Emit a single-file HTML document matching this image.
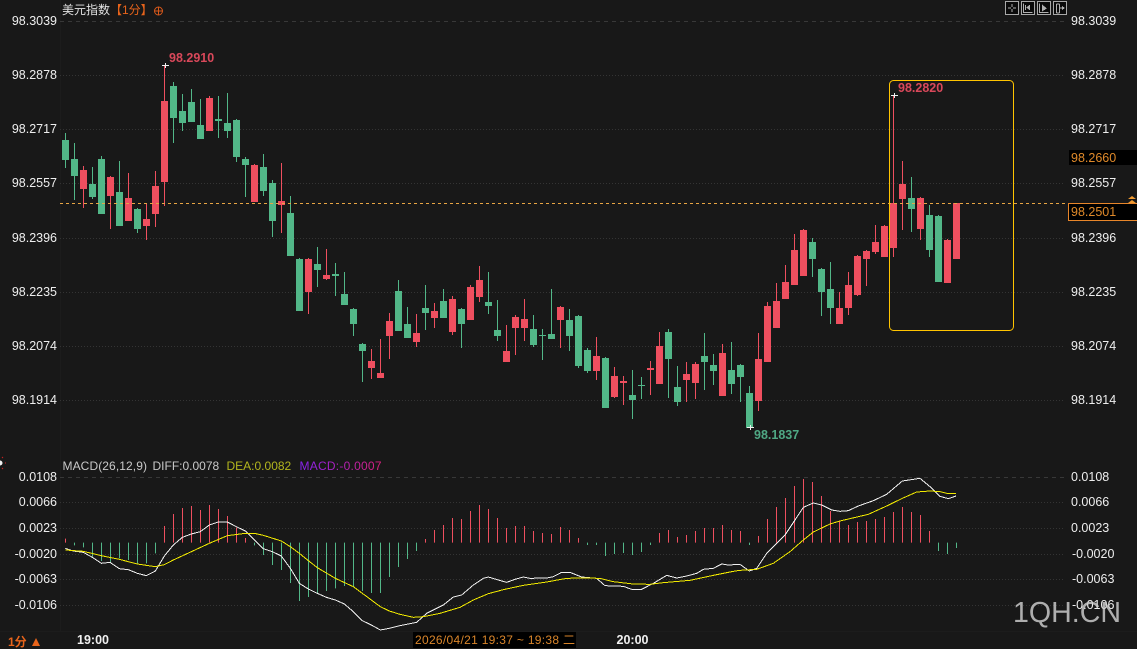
<!DOCTYPE html>
<html lang="zh"><head><meta charset="utf-8"><title>美元指数</title>
<style>
html,body{margin:0;padding:0;background:#181818;width:1137px;height:649px;overflow:hidden}
svg{display:block;position:absolute;left:0;top:0}
text{font-family:"Liberation Sans","Noto Sans CJK SC",sans-serif;font-size:12px;white-space:pre}
.ax{fill:#eeeeee}
.ax text,.n{font-size:12.5px}
.b{font-weight:bold}
</style></head><body>
<svg width="1137" height="649" viewBox="0 0 1137 649" xmlns="http://www.w3.org/2000/svg">
<defs><linearGradient id="mg" gradientUnits="userSpaceOnUse" x1="300" y1="0" x2="382" y2="0"><stop offset="0" stop-color="#8422ee"/><stop offset="1" stop-color="#d8207c"/></linearGradient></defs>
<rect width="1137" height="649" fill="#181818"/>
<path d="M60.5 0V631M0 631.5H1137" stroke="#1c1c1c"/>
<g shape-rendering="crispEdges">
<path d="M60 21.5H1065M60 477.5H1065" stroke="#383838" stroke-dasharray="4 4"/>
<path d="M60 75.5H1065M60 129.5H1065M60 183.5H1065M60 238.5H1065M60 292.5H1065M60 346.5H1065M60 400.5H1065M60 502.5H1065M60 528.5H1065M60 554.5H1065M60 579.5H1065M60 605.5H1065" stroke="#343434" stroke-dasharray="1 2"/>
<!-- green wicks -->
<path fill="none" stroke="#52b788" d="M65.5 133V168M74.5 143V200M92.5 167V199M101.5 156V214M119.5 161V226M137.5 208V233M173.5 82V143M182.5 94V131M191.5 89V122M200.5 99V139M218.5 96V138M227.5 93V138M236.5 119V162M245.5 157V197M263.5 154V196M272.5 180V237M290.5 196V256M299.5 258V311M317.5 247V287M335.5 263V296M344.5 272V305M353.5 308V336M362.5 343V382M398.5 280V331M407.5 307V338M425.5 285V330M443.5 289V318M461.5 308V348M488.5 272V314M497.5 300V341M533.5 315V347M542.5 329V360M551.5 289V339M569.5 309V351M578.5 315V368M587.5 348V373M605.5 357V408M632.5 370V419M641.5 377V399M668.5 329V398M677.5 366V406M704.5 333V390M713.5 354V385M731.5 342V394M740.5 364V402M749.5 386V428M812.5 238V277M821.5 268V316M830.5 262V324M911.5 177V232M929.5 205V257M938.5 215V282"/>
<!-- green bodies -->
<path fill="none" stroke="#52b788" stroke-width="7" d="M65.5 140V160M74.5 159V176M92.5 184V197M101.5 159V214M119.5 192V226M137.5 209V229M173.5 86V118M182.5 111V123M191.5 102V122M200.5 125V139M218.5 119V121M227.5 123V131M236.5 120V157M245.5 159V165M263.5 167V191M272.5 183V221M290.5 213V256M299.5 259V311M317.5 264V270M335.5 274V276M344.5 294V305M353.5 309V324M362.5 344V351M398.5 291V331M407.5 324V338M425.5 308V313M443.5 301V318M461.5 309V324M488.5 302V306M497.5 330V336M533.5 329V345M542.5 335V336M551.5 334V339M569.5 320V336M578.5 316V366M587.5 350V371M605.5 358V408M632.5 395V400M641.5 385V386M668.5 332V359M677.5 387V402M704.5 356V362M713.5 365V371M731.5 370V384M740.5 365V377M749.5 393V428M812.5 242V259M821.5 269V292M830.5 289V308M911.5 198V209M929.5 215V250M938.5 216V282"/>
<!-- red wicks -->
<path fill="none" stroke="#ef4f5f" d="M83.5 166V208M110.5 176V229M128.5 173V221M146.5 203V240M155.5 171V227M164.5 65V206M209.5 96V131M254.5 164V202M281.5 163V233M308.5 258V314M326.5 249V280M371.5 349V379M380.5 339V378M389.5 313V359M416.5 314V347M434.5 303V328M452.5 296V335M470.5 285V320M479.5 266V302M506.5 325V362M515.5 315V355M524.5 299V341M560.5 306V348M596.5 337V380M614.5 367V398M623.5 376V405M650.5 361V395M659.5 332V384M686.5 362V402M695.5 362V399M722.5 344V396M758.5 333V411M767.5 302V362M776.5 283V328M785.5 265V299M794.5 234V285M803.5 229V276M839.5 292V324M848.5 272V315M857.5 255V296M866.5 250V286M875.5 225V254M884.5 225V257M893.5 95V257M902.5 161V230M920.5 197V240M947.5 239V283M956.5 203V259"/>
<!-- red bodies -->
<path fill="none" stroke="#ef4f5f" stroke-width="7" d="M83.5 170V189M110.5 177V196M128.5 198V221M146.5 219V226M155.5 186V214M164.5 101V182M209.5 98V131M254.5 165V202M281.5 201V205M308.5 259V292M326.5 275V279M371.5 361V368M380.5 373V378M389.5 321V336M416.5 333V342M434.5 311V318M452.5 299V332M470.5 287V320M479.5 280V297M506.5 351V362M515.5 317V328M524.5 319V328M560.5 307V320M596.5 356V371M614.5 376V397M623.5 381V383M650.5 368V370M659.5 346V384M686.5 374V380M695.5 364V383M722.5 353V396M758.5 359V401M767.5 306V362M776.5 301V328M785.5 282V299M794.5 250V285M803.5 230V276M839.5 308V324M848.5 285V308M857.5 256V295M866.5 251V259M875.5 242V252M884.5 226V257M893.5 203V248M902.5 184V199M920.5 198V229M947.5 240V283M956.5 203V259"/>
<!-- crosses -->
<path stroke="#f0f0f0" fill="none" d="M162 65.5h7M165.5 63v5M891 95.5h7M894.5 93v5M747 427.5h7M750.5 425v5"/>
<!-- price line -->
<path d="M60 203.5H1065" stroke="#e8a544" stroke-dasharray="3 3"/>
<!-- macd bars -->
<g transform="translate(0 450) scale(1 .33333)" fill="none">
<path stroke="#52b788" d="M74.5 278V286M83.5 278V292M92.5 278V320M101.5 278V333M110.5 278V338M119.5 278V325M128.5 278V330M137.5 278V340M146.5 278V340M155.5 278V310M254.5 278V286M263.5 278V315M272.5 278V345M281.5 278V360M290.5 278V399M299.5 278V453M308.5 278V441M317.5 278V430M326.5 278V423M335.5 278V415M344.5 278V408M353.5 278V412M362.5 278V423M371.5 278V429M380.5 278V429M389.5 278V381M398.5 278V351M407.5 278V327M416.5 278V303M587.5 278V285M596.5 278V285M605.5 278V318M614.5 278V312M623.5 278V309M632.5 278V315M641.5 278V306M650.5 278V285M749.5 278V285M938.5 278V303M947.5 278V312M956.5 278V294"/>
<path stroke="#ef4f5f" d="M65.5 278V266M164.5 278V228M173.5 278V192M182.5 278V174M191.5 278V168M200.5 278V180M209.5 278V165M218.5 278V177M227.5 278V198M236.5 278V233M245.5 278V264M425.5 278V267M434.5 278V240M443.5 278V225M452.5 278V204M461.5 278V207M470.5 278V183M479.5 278V165M488.5 278V177M497.5 278V204M506.5 278V234M515.5 278V228M524.5 278V228M533.5 278V243M542.5 278V249M551.5 278V252M560.5 278V231M569.5 278V240M578.5 278V264M659.5 278V249M668.5 278V240M677.5 278V261M686.5 278V255M695.5 278V243M704.5 278V234M713.5 278V234M722.5 278V225M731.5 278V240M740.5 278V243M758.5 278V258M767.5 278V207M776.5 278V171M785.5 278V144M794.5 278V108M803.5 278V87M812.5 278V96M821.5 278V138M830.5 278V183M839.5 278V213M848.5 278V225M857.5 278V216M866.5 278V213M875.5 278V207M884.5 278V201M893.5 278V186M902.5 278V171M911.5 278V186M920.5 278V195M929.5 278V243"/>
</g>
</g>
<!-- MACD lines -->
<g fill="none" stroke-width="3" stroke-linejoin="round" shape-rendering="crispEdges">
<g transform="translate(0 450) scale(.33333)">
<polyline stroke="#f0f0f0" points="196,295 220,303 250,307 277,322 304,340 330,337 358,356 385,359 412,370 439,377 466,363 493,318 520,285 547,262 574,252 601,245 628,225 655,216 682,216 709,230 736,243 763,270 790,296 817,305 844,318 871,355 898,400 925,417 952,430 979,442 1006,450 1033,462 1060,485 1087,512 1114,525 1141,540 1168,535 1200,527"/>
<polyline stroke="#f2ea00" points="196,300 250,304 304,317 358,328 412,342 466,350 493,344 520,330 574,305 628,280 682,257 736,250 763,250 790,256 844,273 871,290 898,310 925,332 952,353 1006,385 1060,410 1114,450 1141,470 1168,483 1200,493"/>
</g>
<g transform="translate(400 450) scale(.33333)">
<polyline stroke="#f0f0f0" points="0,527 50,517 80,490 130,465 160,441 185,435 220,405 250,385 265,381 295,390 320,397 345,388 370,381 390,385 440,384 460,380 485,367 510,367 545,381 590,385 615,407 670,409 695,418 725,418 760,400 800,376 830,384 860,378 890,370 910,358 940,355 965,342 985,345 1020,343"/>
<polyline stroke="#f2ea00" points="0,493 40,502 70,500 120,490 180,472 220,450 265,431 310,419 370,406 440,396 500,385 550,384 600,385 640,395 700,402 750,403 790,398 870,391 940,376 1000,364 1020,361"/>
</g>
<g transform="translate(740 450) scale(.33333)">
<polyline stroke="#f0f0f0" points="0,343 28,363 50,355 80,310 135,255 165,210 190,172 220,159 245,165 275,180 300,184 325,182 355,168 400,152 440,133 487,93 540,85 570,110 600,139 625,146 648,138"/>
<polyline stroke="#f2ea00" points="0,361 50,358 100,340 150,305 190,270 220,246 270,222 300,213 385,193 440,168 487,145 530,126 570,123 600,125 620,130 648,130"/>
</g>
</g>
<!-- yellow box -->
<rect x="889.5" y="80.5" width="124" height="250" rx="4" fill="none" stroke="#ffc400"/>
<!-- left axis -->
<g class="ax" text-anchor="end">
<text x="57" y="25">98.3039</text><text x="57" y="79">98.2878</text><text x="57" y="133">98.2717</text><text x="57" y="187">98.2557</text><text x="57" y="242">98.2396</text><text x="57" y="296">98.2235</text><text x="57" y="350">98.2074</text><text x="57" y="404">98.1914</text>
<text x="57" y="481">0.0108</text><text x="57" y="506">0.0066</text><text x="57" y="532">0.0023</text><text x="57" y="558">-0.0020</text><text x="57" y="583">-0.0063</text><text x="57" y="609">-0.0106</text>
</g>
<!-- right axis -->
<rect x="1069" y="150" width="68" height="15" fill="#000"/>
<rect x="1068.5" y="203.5" width="69" height="17" fill="#000" stroke="#e8862a"/>
<g class="ax">
<text x="1071" y="25">98.3039</text><text x="1071" y="79">98.2878</text><text x="1071" y="133">98.2717</text><text x="1071" y="187">98.2557</text><text x="1071" y="242">98.2396</text><text x="1071" y="296">98.2235</text><text x="1071" y="350">98.2074</text><text x="1071" y="404">98.1914</text>
<text x="1071" y="481">0.0108</text><text x="1071" y="506">0.0066</text><text x="1071" y="532">0.0023</text><text x="1072" y="558">-0.0020</text><text x="1072" y="583">-0.0063</text><text x="1072" y="609">-0.0106</text>
</g>
<text x="1071" y="162" class="n" fill="#e08a2a">98.2660</text>
<text x="1071" y="216" class="n" fill="#e08a2a">98.2501</text>
<path d="M1128 199l4-3 4 3zM1128 203l4-3 4 3z" fill="#f09a30"/>
<!-- price marks -->
<text x="169" y="62" class="b n" fill="#d9485a">98.2910</text>
<text x="898" y="92" class="b n" fill="#d9485a">98.2820</text>
<text x="754" y="439" class="b n" fill="#4fa884">98.1837</text>
<!-- header -->
<text x="62" y="14" fill="#e2e2e2">美元指数</text>
<text x="110" y="14" fill="#e8641b">【1分】</text>
<g fill="none" stroke="#d8581a"><circle cx="158.5" cy="11" r="4"/><path d="M154 11h9M158.5 7v8"/></g>
<!-- toolbar -->
<g shape-rendering="crispEdges">
<g fill="#0a0a0a" stroke="#a8a8a8"><rect x="1005.5" y="1.5" width="13" height="13"/><rect x="1021.5" y="1.5" width="13" height="13"/><rect x="1037.5" y="1.5" width="13" height="13"/><rect x="1053.5" y="1.5" width="13" height="13"/></g>
<path stroke="#b0b0b0" fill="none" d="M1012 4v3M1012 9v3M1008 8h3M1013 8h3M1023.5 3.5v9h9M1029.5 5v5M1025.5 5v5M1039.5 3.5v9h9M1056.5 4v9M1059.5 4v9M1056.5 4h3M1056.5 13h3M1060 8h4"/>
<path fill="#b0b0b0" d="M1026 7.5l3-2v4zM1042 4.5l5 4-5 3zM1062 6l3 2-3 2z"/>
</g>
<!-- macd header -->
<text x="62.5" y="470" fill="#c9c9c9" textLength="84.5">MACD(26,12,9)</text>
<text x="152.5" y="470" fill="#c9c9c9">DIFF:0.0078</text>
<text x="226.5" y="470" fill="#b3b61e">DEA:0.0082</text>
<text x="299.5" y="470" fill="url(#mg)" textLength="82">MACD:-0.0007</text>
<circle cx="0" cy="463" r="2.5" fill="#f0f0f0"/>
<path d="M2 457l1 1M5 463h1M2 468l1 1" stroke="#d02020" fill="none"/>
<!-- bottom -->
<text x="8" y="646" class="b" fill="#e8641b">1分</text>
<path d="M32 646l4-8 4 8z" fill="#e8641b"/>
<text x="77" y="644" class="b n" fill="#f0f0f0">19:00</text>
<text x="616.5" y="644" class="b n" fill="#f0f0f0">20:00</text>
<rect x="413" y="632" width="163" height="16" fill="#000"/>
<text x="415" y="644" fill="#d9852a" textLength="160">2026/04/21 19:37 ~ 19:38 二</text>
<!-- watermark -->
<text x="1013" y="622" style="font-size:28.6px" fill="#cfcfcf" fill-opacity=".82">1QH.CN</text>
</svg>
</body></html>
